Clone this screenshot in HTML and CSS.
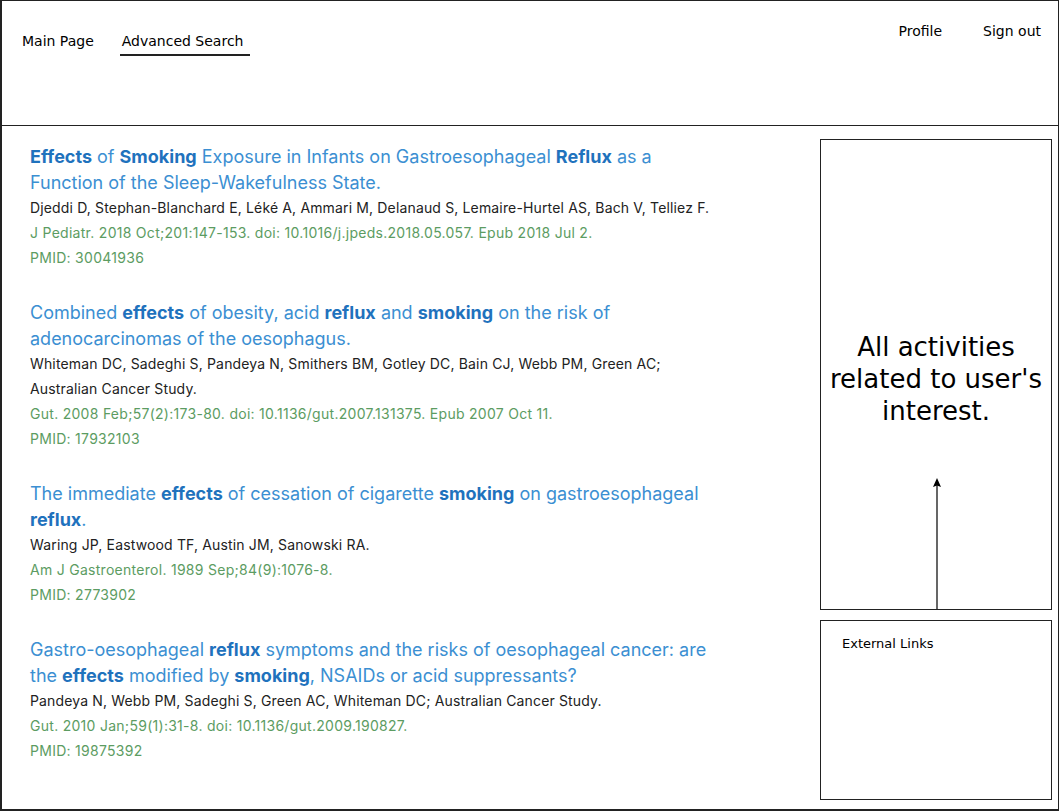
FILE: index.html
```html
<!DOCTYPE html>
<html>
<head>
<meta charset="utf-8">
<link rel="stylesheet" href="styles.css">
</head>
<body>
<div class="frame">
  <header class="header">
    <nav class="nav-left">
      <a class="nav-item">Main Page</a>
      <a class="nav-item active">Advanced Search</a>
    </nav>
    <nav class="nav-right">
      <a class="nav-item">Profile</a>
      <a class="nav-item">Sign out</a>
    </nav>
  </header>
  <main class="main">
    <section class="results">
      <article class="result">
        <h2 class="title"><b>Effects</b> of <b>Smoking</b> Exposure in Infants on Gastroesophageal <b>Reflux</b> as a Function of the Sleep-Wakefulness State.</h2>
        <p class="authors">Djeddi D, Stephan-Blanchard E, Léké A, Ammari M, Delanaud S, Lemaire-Hurtel AS, Bach V, Telliez F.</p>
        <p class="cite">J Pediatr. 2018 Oct;201:147-153. doi: 10.1016/j.jpeds.2018.05.057. Epub 2018 Jul 2.</p>
        <p class="cite">PMID: 30041936</p>
      </article>
      <article class="result">
        <h2 class="title">Combined <b>effects</b> of obesity, acid <b>reflux</b> and <b>smoking</b> on the risk of adenocarcinomas of the oesophagus.</h2>
        <p class="authors">Whiteman DC, Sadeghi S, Pandeya N, Smithers BM, Gotley DC, Bain CJ, Webb PM, Green AC;<br>Australian Cancer Study.</p>
        <p class="cite">Gut. 2008 Feb;57(2):173-80. doi: 10.1136/gut.2007.131375. Epub 2007 Oct 11.</p>
        <p class="cite">PMID: 17932103</p>
      </article>
      <article class="result">
        <h2 class="title">The immediate <b>effects</b> of cessation of cigarette <b>smoking</b> on gastroesophageal <b>reflux</b>.</h2>
        <p class="authors">Waring JP, Eastwood TF, Austin JM, Sanowski RA.</p>
        <p class="cite">Am J Gastroenterol. 1989 Sep;84(9):1076-8.</p>
        <p class="cite">PMID: 2773902</p>
      </article>
      <article class="result">
        <h2 class="title">Gastro-oesophageal <b>reflux</b> symptoms and the risks of oesophageal cancer: are the <b>effects</b> modified by <b>smoking</b>, NSAIDs or acid suppressants?</h2>
        <p class="authors">Pandeya N, Webb PM, Sadeghi S, Green AC, Whiteman DC; Australian Cancer Study.</p>
        <p class="cite">Gut. 2010 Jan;59(1):31-8. doi: 10.1136/gut.2009.190827.</p>
        <p class="cite">PMID: 19875392</p>
      </article>
    </section>
    <aside class="side">
      <div class="box activity">
        <p class="activity-text">All activities related to user's interest.</p>
        <svg class="arrow" width="12" height="131" viewBox="0 0 12 131">
          <line x1="6" y1="6" x2="6" y2="131" stroke="#000" stroke-width="1.2"/>
          <path d="M6 0 L10 9 L6 7.5 L2 9 Z" fill="#000"/>
        </svg>
      </div>
      <div class="box links">
        <p class="links-title">External Links</p>
      </div>
    </aside>
  </main>
</div>
</body>
</html>
```

FILE: styles.css
```css
* { box-sizing: border-box; }
html, body { margin: 0; padding: 0; background: #fff; }
body { font-family: "DejaVu Sans", Verdana, sans-serif; color: #000; }

.frame {
  width: 1059px;
  height: 811px;
  border: 1px solid #222;
  border-left-width: 2px;
  border-bottom-width: 2px;
  display: flex;
  flex-direction: column;
}

.header {
  height: 125px;
  flex: none;
  border-bottom: 1px solid #222;
  display: flex;
  justify-content: space-between;
  align-items: flex-start;
}

.nav-left {
  display: flex;
  gap: 28px;
  padding: 30px 0 0 20px;
}
.nav-right {
  display: flex;
  gap: 41px;
  padding: 20px 17px 0 0;
}
.nav-item {
  font-size: 14px;
  line-height: 20px;
  color: #000;
}
.nav-item.active {
  border-bottom: 2px solid #222;
  padding: 0 7px 3px 2px;
  margin-left: -2px;
}

.main {
  flex: 1;
  display: flex;
  justify-content: space-between;
  min-height: 0;
}

.results {
  padding: 18px 0 0 28px;
  font-family: Inter, "Liberation Sans", sans-serif;
}
.result { margin-bottom: 30px; }
.title {
  margin: 0;
  font-size: 18px;
  font-weight: 400;
  line-height: 25.5px;
  color: #3b8fd2;
  width: 680px;
}
.title b { font-weight: 700; color: #1f72bd; }
.authors {
  margin: 0;
  font-size: 14px;
  letter-spacing: 0.15px;
  line-height: 25px;
  color: #222;
}
.cite {
  margin: 0;
  font-size: 14px;
  letter-spacing: 0.28px;
  line-height: 25px;
  color: #5c9c62;
}

.side {
  width: 238px;
  padding: 13px 6px 9px 0;
  display: flex;
  flex-direction: column;
  gap: 10px;
}
.box {
  border: 1px solid #222;
}
.activity {
  height: 471px;
  display: flex;
  flex-direction: column;
  align-items: center;
  justify-content: flex-end;
}
.activity-text {
  margin: 0 0 51px;
  font-size: 26px;
  line-height: 32px;
  text-align: center;
  padding: 0 4px;
}
.arrow { display: block; margin-left: 1px; }
.links {
  flex: 1;
  padding: 13px 0 0 21px;
}
.links-title {
  margin: 0;
  font-size: 13px;
  line-height: 20px;
}
```
